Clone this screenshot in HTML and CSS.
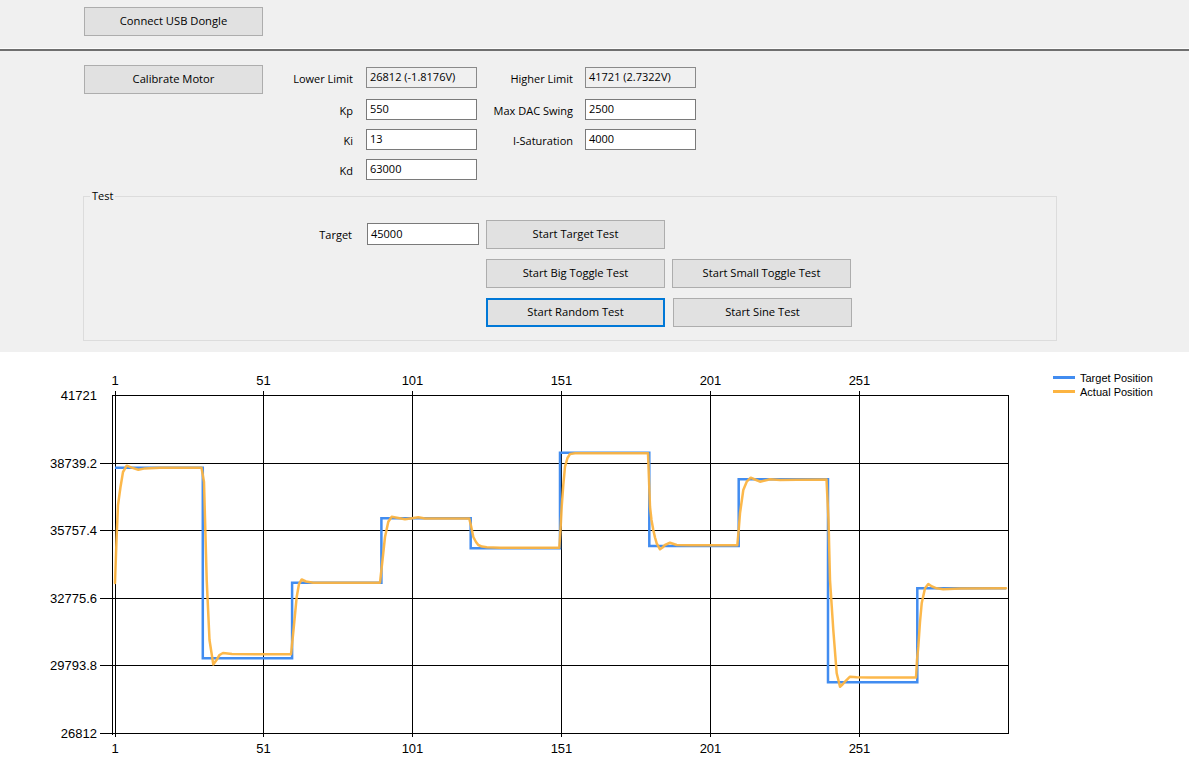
FILE: index.html
```html
<!DOCTYPE html>
<html>
<head>
<meta charset="utf-8">
<title>Motor PID Tuner</title>
<link rel="stylesheet" href="styles.css">
</head>
<body>
<div class="app">
  <div class="toolbar">
    <button class="btn">Connect USB Dongle</button>
  </div>
  <div class="separator"></div>
  <div class="controls">
    <div class="params">
      <button class="btn">Calibrate Motor</button>
      <span class="lbl">Lower Limit</span>
      <div class="tb ro">26812 (-1.8176V)</div>
      <span class="lbl lbl2">Higher Limit</span>
      <div class="tb ro">41721 (2.7322V)</div>

      <span class="lbl c2">Kp</span>
      <div class="tb">550</div>
      <span class="lbl lbl2">Max DAC Swing</span>
      <div class="tb">2500</div>

      <span class="lbl c2">Ki</span>
      <div class="tb">13</div>
      <span class="lbl lbl2">I-Saturation</span>
      <div class="tb">4000</div>

      <span class="lbl c2">Kd</span>
      <div class="tb">63000</div>
    </div>

    <div class="group">
      <span class="group-title">Test</span>
      <div class="test-grid">
        <span class="lbl target-lbl">Target</span>
        <div class="tb target-tb">45000</div>
        <button class="btn">Start Target Test</button>

        <button class="btn c3">Start Big Toggle Test</button>
        <button class="btn">Start Small Toggle Test</button>

        <button class="btn c3 focused">Start Random Test</button>
        <button class="btn shift">Start Sine Test</button>
      </div>
    </div>
  </div>

  <div class="chart">
    <svg class="plot" width="1189" height="419" viewBox="0 352 1189 419" xmlns="http://www.w3.org/2000/svg">
      <g class="grid" stroke="#000" stroke-width="1" fill="none" shape-rendering="crispEdges">
        <line x1="100" y1="463.5" x2="1008" y2="463.5"/>
        <line x1="100" y1="530.5" x2="1008" y2="530.5"/>
        <line x1="100" y1="598.5" x2="1008" y2="598.5"/>
        <line x1="100" y1="665.5" x2="1008" y2="665.5"/>
        <line x1="100" y1="733.5" x2="1008" y2="733.5"/>
        <line x1="115.5" y1="391" x2="115.5" y2="737"/>
        <line x1="263.5" y1="391" x2="263.5" y2="737"/>
        <line x1="412.5" y1="391" x2="412.5" y2="737"/>
        <line x1="561.5" y1="391" x2="561.5" y2="737"/>
        <line x1="710.5" y1="391" x2="710.5" y2="737"/>
        <line x1="859.5" y1="391" x2="859.5" y2="737"/>
        <line x1="112.5" y1="395" x2="112.5" y2="735"/>
        <line x1="112" y1="395.5" x2="1008" y2="395.5"/>
        <line x1="1008.5" y1="395" x2="1008.5" y2="734"/>
      </g>

      <g class="axis-text" font-size="13">
        <text x="97" y="400" text-anchor="end">41721</text>
        <text x="97" y="468" text-anchor="end">38739.2</text>
        <text x="97" y="535" text-anchor="end">35757.4</text>
        <text x="97" y="603" text-anchor="end">32775.6</text>
        <text x="97" y="670" text-anchor="end">29793.8</text>
        <text x="97" y="738" text-anchor="end">26812</text>

        <text x="115" y="385" text-anchor="middle">1</text>
        <text x="263.5" y="385" text-anchor="middle">51</text>
        <text x="412.5" y="385" text-anchor="middle">101</text>
        <text x="561.5" y="385" text-anchor="middle">151</text>
        <text x="710.5" y="385" text-anchor="middle">201</text>
        <text x="859.5" y="385" text-anchor="middle">251</text>

        <text x="115" y="753" text-anchor="middle">1</text>
        <text x="263.5" y="753" text-anchor="middle">51</text>
        <text x="412.5" y="753" text-anchor="middle">101</text>
        <text x="561.5" y="753" text-anchor="middle">151</text>
        <text x="710.5" y="753" text-anchor="middle">201</text>
        <text x="859.5" y="753" text-anchor="middle">251</text>
      </g>

      <path class="series-target" fill="none" stroke="#418CF0" stroke-width="2.5" stroke-linejoin="miter"
        d="M115,467.7 H202.8 V658.3 H292.1 V582.7 H381.4 V518.3 H470.7 V548.3 H560 V452.7 H649.3 V546 H738.7 V479.3 H828 V682.3 H917.3 V588.3 H1006"/>

      <polyline class="series-actual" fill="none" stroke="#FCB441" stroke-width="2.5" stroke-linejoin="round" stroke-linecap="round" stroke-opacity="0.95"
        points="115,583 116.5,540 118,505 120.5,487 123,472 126.7,465.7 131.7,467.6 138.3,469.8 145,468.4 160,467.8 201.5,467.8
        204,482 206.7,580 209.5,640 213.3,664.5 216.5,660 219.5,655 223,653 232,654 260,654.3 291,654.3
        293.5,630 296.7,597 299,584 301.7,579.5 306,581.5 313.3,582.7 380,582.7
        382.5,560 385,537 388.3,521.7 391.7,516.7 397,517.8 405,519.3 412,518.3 418.3,517.3 425,518.5 430,518.6 469.3,518.6
        471.5,528 473.3,537 476,542 478.3,545 482,546.6 486.7,547.3 500,547.7 559.3,547.7
        560.5,530 561.7,506.7 563.3,485 565,466.7 567.5,458 570,454 575,453.3 648,453.3
        650,506.7 651.5,520 653.3,530 655,537.5 656.7,543.3 660,549.3 662.5,547.5 665,545 670,542.7 676.7,545 690,545.3 737.3,545.3
        738.7,530 740,513.3 743.3,490 746.7,481.7 750.7,477.7 755,479.5 760,481.7 765,480.5 770,479.3 780,480 796.7,479.8 826.5,479.5
        828.5,520 830,580 833.3,630 836.7,673.3 840,686.7 842.5,684.5 845,681.7 850,676.7 856.7,677.3 870,677.5 916,677.5
        917,660 918.3,646.7 920,622 921.7,603.3 925,588.3 928.3,584 932,586.5 936.7,588.3 943.3,589.3 960,588.5 1006,588.3"/>

      <g class="legend" font-size="11">
        <line x1="1053" y1="377.5" x2="1075" y2="377.5" stroke="#418CF0" stroke-width="3"/>
        <line x1="1053" y1="391.5" x2="1075" y2="391.5" stroke="#FCB441" stroke-width="3"/>
        <text x="1080" y="381.5">Target Position</text>
        <text x="1080" y="395.5">Actual Position</text>
      </g>
    </svg>
  </div>
</div>
</body>
</html>
```

FILE: styles.css
```css
html, body {
  margin: 0;
  padding: 0;
  overflow: hidden;
}

body {
  background: #f0f0f0;
  font-family: "Open Sans", "Noto Sans", sans-serif;
  font-size: 11px;
  color: #000;
}

.app {
  width: 1189px;
  height: 771px;
}

.toolbar {
  height: 48px;
  box-sizing: border-box;
  padding: 7px 0 0 84px;
}

.btn {
  width: 179px;
  height: 29px;
  box-sizing: border-box;
  margin: 0;
  padding: 0 0 2px 0;
  background: #e1e1e1;
  border: 1px solid #adadad;
  border-radius: 0;
  font-family: inherit;
  font-size: 11.2px;
  color: #000;
  text-align: center;
}

.btn.focused {
  border: 2px solid #0078d7;
}

.btn.shift {
  margin-left: 1px;
}

.separator {
  height: 2px;
  border-top: 1px solid #fcfcfc;
  background: #6f6f6f;
}

.controls {
  height: 301px;
  box-sizing: border-box;
  padding: 14px 0 0 84px;
}

.params {
  display: grid;
  grid-template-columns: 179px 103px 111px 108px 111px;
  grid-template-rows: 32px 30px 30px 30px;
  align-items: start;
}

.lbl {
  display: block;
  text-align: right;
  padding-right: 13px;
  margin-top: 3px;
  line-height: 21px;
  white-space: nowrap;
}

.lbl.lbl2 {
  padding-right: 12px;
}

.lbl.c2 {
  grid-column: 2;
}

.tb {
  margin-top: 2px;
  height: 21px;
  box-sizing: border-box;
  border: 1px solid #7a7a7a;
  background: #ffffff;
  padding-left: 3px;
  line-height: 18px;
  white-space: nowrap;
}

.tb.ro {
  background: #f0f0f0;
  border-color: #8a8a8a;
}

.group {
  position: relative;
  margin: 9px 0 0 -1px;
  width: 974px;
  height: 145px;
  box-sizing: border-box;
  border: 1px solid #dcdcdc;
  padding-top: 23px;
}

.group-title {
  position: absolute;
  left: 6px;
  top: -9px;
  padding: 0 2px;
  background: #f0f0f0;
  line-height: 16px;
}

.test-grid {
  display: grid;
  grid-template-columns: 276px 112px 179px 179px;
  grid-auto-rows: 29px;
  column-gap: 7px;
  row-gap: 10px;
  align-items: start;
}

.target-lbl {
  padding-right: 8px;
  margin-top: 4px;
}

.target-tb {
  margin-top: 3px;
  height: 22px;
  line-height: 19px;
}

.btn.c3 {
  grid-column: 3;
}

.chart {
  height: 419px;
  background: #ffffff;
}

.plot {
  display: block;
  font-family: "Liberation Sans", Arial, sans-serif;
}

.axis-text text,
.legend text {
  fill: #000;
}
```
